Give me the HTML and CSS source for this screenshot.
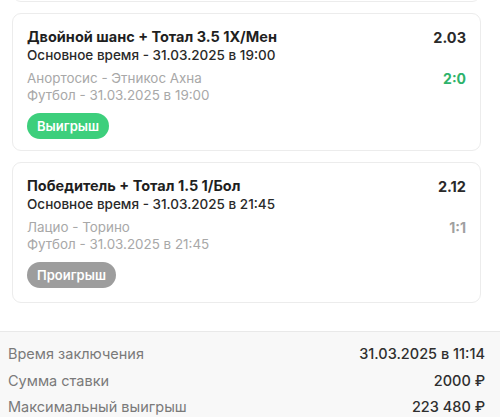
FILE: index.html
```html
<!DOCTYPE html>
<html lang="ru">
<head>
    <meta charset="UTF-8">
    <meta name="viewport" content="width=device-width, initial-scale=1.0">
    <title>Экспресс</title>
    <link rel="stylesheet" href="styles.css">
</head>
<body>
    <div class="bets">
        <div class="card card-tail"></div>

        <div class="card">
            <div class="row">
                <div class="market">Двойной шанс + Тотал 3.5 1X/Мен</div>
                <div class="coef">2.03</div>
            </div>
            <div class="period">Основное время - 31.03.2025 в 19:00</div>
            <div class="row event">
                <div class="teams">Анортосис - Этникос Ахна</div>
                <div class="score win">2:0</div>
            </div>
            <div class="sport">Футбол - 31.03.2025 в 19:00</div>
            <span class="status status-win">Выигрыш</span>
        </div>

        <div class="card">
            <div class="row">
                <div class="market">Победитель + Тотал 1.5 1/Бол</div>
                <div class="coef">2.12</div>
            </div>
            <div class="period">Основное время - 31.03.2025 в 21:45</div>
            <div class="row event">
                <div class="teams">Лацио - Торино</div>
                <div class="score">1:1</div>
            </div>
            <div class="sport">Футбол - 31.03.2025 в 21:45</div>
            <span class="status status-lose">Проигрыш</span>
        </div>
    </div>

    <div class="summary">
        <div class="summary-row">
            <span class="label">Время заключения</span>
            <span class="value">31.03.2025 в 11:14</span>
        </div>
        <div class="summary-row">
            <span class="label">Сумма ставки</span>
            <span class="value">2000 ₽</span>
        </div>
        <div class="summary-row">
            <span class="label">Максимальный выигрыш</span>
            <span class="value">223 480 ₽</span>
        </div>
    </div>
</body>
</html>
```

FILE: styles.css
```css
body {
    font-family: 'Inter', 'Noto Sans', sans-serif;
    margin: 0;
    background: #fff;
    color: #222;
    overflow: hidden;
}

.bets {
    padding: 0 19px 28px 12px;
    display: flex;
    flex-direction: column;
    gap: 11px;
}

.card {
    border: 1px solid #ececec;
    border-radius: 9px;
    padding: 14px 14px 11px 14px;
    background: #fff;
}

.card:last-child {
    padding-bottom: 14px;
}

.card-tail {
    height: 20px;
    margin-top: -20px;
    padding: 0;
}

.row {
    display: flex;
    justify-content: space-between;
    align-items: center;
}

.market {
    font-size: 14.5px;
    font-weight: 700;
    line-height: 18px;
    color: #1f1f1f;
}

.coef {
    font-size: 14.5px;
    font-weight: 700;
    color: #2a2a2a;
}

.period {
    font-size: 13.5px;
    font-weight: 500;
    line-height: 18px;
    color: #2a2a2a;
}

.event {
    margin-top: 6px;
}

.teams,
.sport {
    font-size: 13.4px;
    line-height: 17px;
    color: #a8a8a8;
}

.score {
    font-size: 14px;
    font-weight: 700;
    color: #a0a0a0;
}

.score.win {
    color: #2eb36b;
}

.status {
    display: inline-block;
    margin-top: 9px;
    padding: 0 10px;
    height: 26px;
    line-height: 26px;
    border-radius: 13px;
    font-size: 13px;
    font-weight: 600;
    color: #fff;
}

.status-win {
    background: #3dcf7c;
}

.status-lose {
    background: #9d9d9d;
}

.summary {
    background: #f8f8f8;
    border-top: 1px solid #e9e9e9;
    padding: 9px 15px 0 8px;
}

.summary-row {
    display: flex;
    justify-content: space-between;
    font-size: 14.5px;
    line-height: 26.5px;
}

.label {
    color: #7a7a7a;
}

.value {
    color: #2f2f2f;
    font-weight: 500;
}
```
